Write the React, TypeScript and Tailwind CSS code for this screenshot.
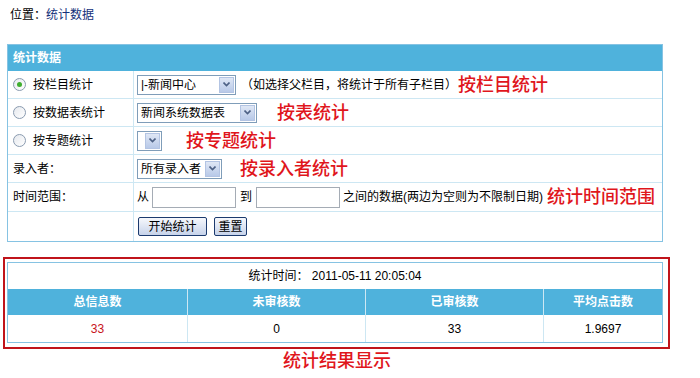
import React from "react";

const font = { fontFamily: '"Liberation Sans", "Noto Sans CJK SC", sans-serif' };

const Radio: React.FC<{ checked?: boolean }> = ({ checked }) => (
  <span className="w-[13px] h-[13px] rounded-full border border-[#8a9bb0] bg-gradient-to-br from-[#e6e9ee] to-white flex items-center justify-center">
    {checked && <span className="w-[5px] h-[5px] rounded-full bg-[#3fae2f]" />}
  </span>
);

const Select: React.FC<{ text: string; w: string }> = ({ text, w }) => (
  <div className={`${w} h-[20px] border border-[#7f9db9] bg-white flex items-center`}>
    <span className="flex-1 pl-[3px] text-[12px] leading-none text-black whitespace-nowrap overflow-hidden">{text}</span>
    <span className="w-[15px] h-[16px] mr-[1px] bg-gradient-to-b from-[#dfe7f5] to-[#b8c9e8] border border-[#b3c4e3] flex items-center justify-center">
      <svg width="7" height="5" viewBox="0 0 7 5">
        <path d="M0.5 0.5 L3.5 3.5 L6.5 0.5" stroke="#4d6185" strokeWidth="1.6" fill="none" />
      </svg>
    </span>
  </div>
);

const Note: React.FC<{ children: React.ReactNode; className?: string }> = ({ children, className }) => (
  <span className={`text-[18px] leading-none text-[#e0161c] font-medium ${className ?? ""}`}>{children}</span>
);

const Row: React.FC<{ left: React.ReactNode; children: React.ReactNode; last?: boolean; h?: string }> = ({ left, children, last, h }) => (
  <div className={`flex ${h ?? "h-[28px]"} ${last ? "" : "border-b border-[#cde7f3]"}`}>
    <div className="w-[126px] shrink-0 border-r border-[#cde7f3] flex items-center pl-[5px] gap-[7px]">{left}</div>
    <div className="flex-1 flex items-center pl-[3px]">{children}</div>
  </div>
);

const Btn: React.FC<{ children: React.ReactNode; w: string }> = ({ children, w }) => (
  <button className={`${w} h-[19px] border border-[#1c3a6e] rounded-[2px] bg-gradient-to-b from-[#f6f8fc] to-[#c7d3ea] text-[12px] leading-none text-black flex items-center justify-center`}>
    {children}
  </button>
);

export default function App() {
  return (
    <div className="w-[700px] h-[378px] bg-white text-[12px] text-black overflow-hidden" style={font}>
      <div className="pt-[6px] pl-[10px] h-[44px]">
        位置：<span className="text-[#13307a]">统计数据</span>
      </div>

      <div className="ml-[7px] w-[656px] border border-[#86c3e3]">
        <div className="h-[26px] bg-[#4fb2dc] flex items-center pl-[5px] text-white font-bold">统计数据</div>
        <Row left={<><Radio checked /><span>按栏目统计</span></>}>
          <Select text="|-新闻中心" w="w-[99px]" />
          <span className="ml-[5px]">（如选择父栏目，将统计于所有子栏目）</span>
          <Note className="ml-[1px]">按栏目统计</Note>
        </Row>
        <Row left={<><Radio /><span>按数据表统计</span></>}>
          <Select text="新闻系统数据表" w="w-[120px]" />
          <Note className="ml-[20px]">按表统计</Note>
        </Row>
        <Row left={<><Radio /><span>按专题统计</span></>}>
          <Select text="" w="w-[25px]" />
          <Note className="ml-[24px]">按专题统计</Note>
        </Row>
        <Row left={<span>录入者：</span>}>
          <Select text="所有录入者" w="w-[85px]" />
          <Note className="ml-[18px]">按录入者统计</Note>
        </Row>
        <Row left={<span>时间范围：</span>} h="h-[29px]">
          <span>从</span>
          <span className="ml-[3px] w-[84px] h-[21px] border border-[#a5acb5] bg-white" />
          <span className="ml-[4px]">到</span>
          <span className="ml-[4px] w-[84px] h-[21px] border border-[#a5acb5] bg-white" />
          <span className="ml-[3px] whitespace-nowrap">之间的数据(两边为空则为不限制日期)</span>
          <Note className="ml-[4px] whitespace-nowrap">统计时间范围</Note>
        </Row>
        <Row left={null} last h="h-[29px]">
          <div className="flex gap-[7px] ml-[1px]">
            <Btn w="w-[69px]">开始统计</Btn>
            <Btn w="w-[33px]">重置</Btn>
          </div>
        </Row>
      </div>

      <div className="mt-[15px] ml-[3px] w-[667px] border-2 border-[#c0141b] pt-[3px] pb-[4px] pl-[2px]">
        <div className="w-[656px] border border-[#86c3e3]">
          <div className="h-[26px] flex items-center justify-center">统计时间： 2011-05-11 20:05:04</div>
          <div className="grid grid-cols-[180px_178px_178px_1fr] h-[26px] bg-[#4fb2dc] text-white font-bold">
            {["总信息数", "未审核数", "已审核数", "平均点击数"].map((t, i) => (
              <div key={t} className={`flex items-center justify-center ${i < 3 ? "border-r border-[#cde7f3]" : ""}`}>{t}</div>
            ))}
          </div>
          <div className="grid grid-cols-[180px_178px_178px_1fr] h-[27px]">
            {["33", "0", "33", "1.9697"].map((t, i) => (
              <div key={i} className={`flex items-center justify-center ${i === 0 ? "text-[#c8141b]" : ""} ${i < 3 ? "border-r border-[#cde7f3]" : ""}`}>{t}</div>
            ))}
          </div>
        </div>
      </div>

      <div className="pl-[283px] pt-[3px]">
        <Note>统计结果显示</Note>
      </div>
    </div>
  );
}
